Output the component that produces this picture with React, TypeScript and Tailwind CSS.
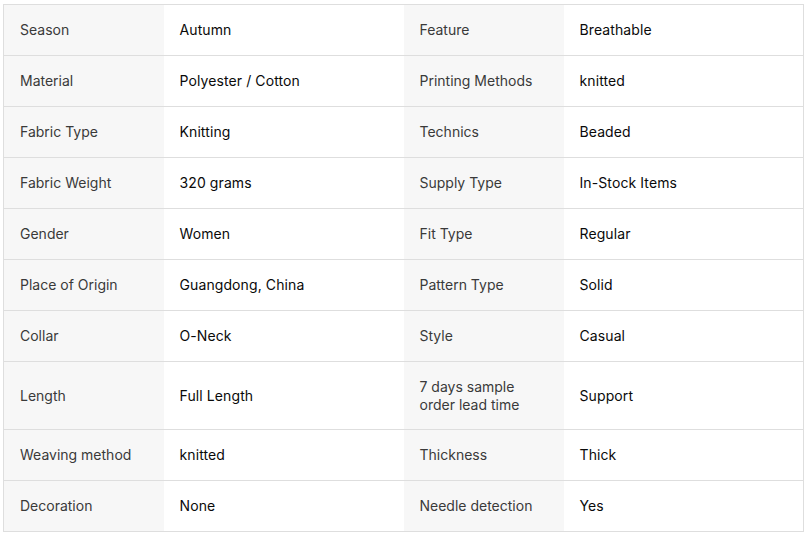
const rows: [string, string, string, string][] = [
  ["Season", "Autumn", "Feature", "Breathable"],
  ["Material", "Polyester / Cotton", "Printing Methods", "knitted"],
  ["Fabric Type", "Knitting", "Technics", "Beaded"],
  ["Fabric Weight", "320 grams", "Supply Type", "In-Stock Items"],
  ["Gender", "Women", "Fit Type", "Regular"],
  ["Place of Origin", "Guangdong, China", "Pattern Type", "Solid"],
  ["Collar", "O-Neck", "Style", "Casual"],
  ["Length", "Full Length", "7 days sample order lead time", "Support"],
  ["Weaving method", "knitted", "Thickness", "Thick"],
  ["Decoration", "None", "Needle detection", "Yes"],
];

export default function App() {
  return (
    <div className="w-[807px] h-[534px] bg-white pt-1 pl-[3px] font-[Inter,sans-serif] text-sm">
      <table className="w-[801px] border-collapse border border-[#dedede] table-fixed">
        <colgroup>
          <col className="w-[160px]" />
          <col className="w-[240px]" />
          <col className="w-[160px]" />
          <col className="w-[240px]" />
        </colgroup>
        <tbody>
          {rows.map(([k1, v1, k2, v2]) => (
            <tr key={k1} className="h-[51px] border-b border-[#dedede]">
              <td className="bg-[#f7f7f7] px-4 py-4 leading-[17.5px] text-[#3a3a3a]">{k1}</td>
              <td className="px-4 py-4 leading-[17.5px] text-[#0a0a0a] tracking-[0.1px]">{v1}</td>
              <td className="bg-[#f7f7f7] px-4 py-4 leading-[17.5px] text-[#3a3a3a]">
                {k2 === "7 days sample order lead time" ? (
                  <>
                    7 days sample
                    <br />
                    order lead time
                  </>
                ) : (
                  k2
                )}
              </td>
              <td className="px-4 py-4 leading-[17.5px] text-[#0a0a0a] tracking-[0.1px]">{v2}</td>
            </tr>
          ))}
        </tbody>
      </table>
    </div>
  );
}
